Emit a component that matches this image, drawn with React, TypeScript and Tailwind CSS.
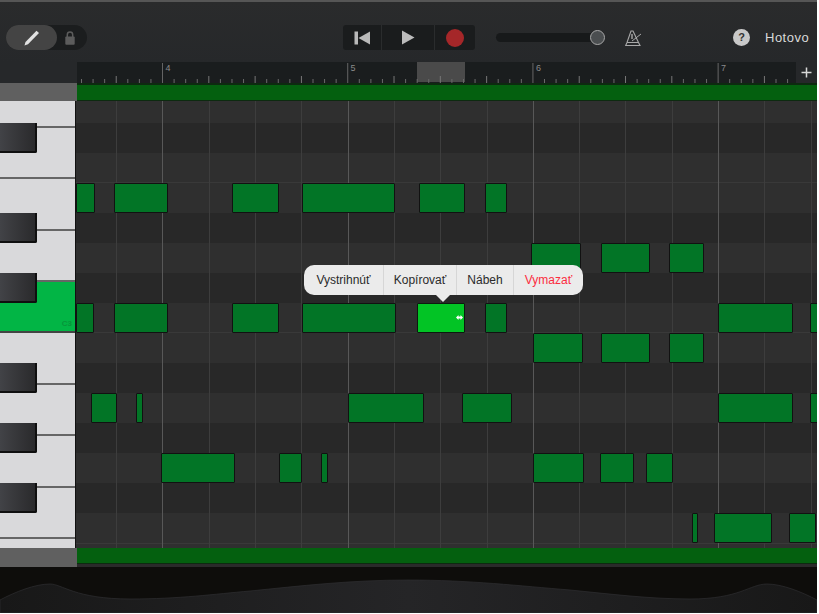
import React from "react";

const STEP = 46.3;
const LINES = Array.from({ length: 16 }, (_, i) => 116.1 + i * STEP);
const BAR_INDEX = new Set([1, 5, 9, 13]);

const ROWS: [number, boolean, boolean?][] = [
  [22, false], [30, true], [30, false, true], [30, false], [30, true], [30, false], [30, true], [30, false, true],
  [30, false], [30, true], [30, false], [30, true], [30, false], [30, true], [30, false],
];

const NOTES: [number, number, number, boolean?][] = [
  [183, 76, 95], [183, 114, 168], [183, 232, 279], [183, 302, 395], [183, 419, 465], [183, 485, 507],
  [243, 531, 581], [243, 601, 650], [243, 669, 704],
  [303, 76, 94], [303, 114, 168], [303, 232, 279], [303, 302, 396], [303, 417, 465, true], [303, 485, 507], [303, 718, 793], [303, 810, 820],
  [333, 533, 583], [333, 601, 650], [333, 669, 704],
  [393, 91, 117], [393, 136, 143], [393, 348, 424], [393, 462, 512], [393, 718, 793], [393, 810, 820],
  [453, 161, 235], [453, 279, 302], [453, 321, 328], [453, 533, 584], [453, 600, 634], [453, 646, 673],
  [513, 692, 698], [513, 714, 772], [513, 789, 816],
];

const WHITE_KEYS: [number, boolean][] = [
  [26.7, false], [51.4, false], [51.5, false], [51.4, false], [51.4, true], [51.5, false], [51.4, false], [51.4, false], [51.4, false], [9, false],
];
const BLACK_KEYS = [123, 213, 273, 363, 423, 483];
const MENU: [string, boolean][] = [["Vystrihnúť", false], ["Kopírovať", false], ["Nábeh", false], ["Vymazať", true]];

function Ruler() {
  const ticks = Array.from({ length: 64 }, (_, i) => 4.5 + i * (STEP / 4));
  return (
    <svg width="719" height="21" className="block">
      {ticks.map((x, i) => {
        const kind = i % 16 === 7 ? 2 : i % 4 === 3 ? 1 : 0;
        return x < 719 ? (
          <line key={i} x1={x} x2={x} y1={kind === 2 ? 1 : kind === 1 ? 14 : 17} y2="21" stroke={kind === 2 ? "#666" : kind === 1 ? "#777" : "#6a6a6a"} strokeWidth="1" />
        ) : null;
      })}
    </svg>
  );
}

export default function App() {
  return (
    <div className="w-[817px] h-[613px] flex flex-col overflow-hidden relative bg-[#26282a]" style={{ fontFamily: '"Liberation Sans", Arial, sans-serif' }}>
      {/* header */}
      <div className="h-[62px] shrink-0 border-t-2 border-[#565656] bg-gradient-to-b from-[#2a2b2c] to-[#26282a] flex items-center pt-[11px]">
        <div className="ml-[6px] w-[81px] h-[25px] rounded-full bg-[#1b1d1e] flex items-center">
          <div className="w-[51px] h-[25px] rounded-full bg-[#444] flex items-center justify-center">
            <svg width="16" height="16" viewBox="0 0 16 16">
              <path d="M0.5 15.5 L1.5 12 L12.5 0.8 L15 3 L4 14.3 Z" fill="#e2e2e2" />
            </svg>
          </div>
          <svg width="10" height="14" viewBox="0 0 10 14" className="ml-[8px]">
            <path d="M2.3 6V3.8a2.7 2.7 0 0 1 5.4 0V6" fill="none" stroke="#5c5c5c" strokeWidth="1.5" />
            <rect x="0.3" y="5.5" width="9.4" height="8.2" rx="1" fill="#5c5c5c" />
          </svg>
        </div>

        <div className="ml-[256px] w-[132px] h-[25px] rounded-[3px] bg-[#1a1c1d] flex">
          <div className="w-[39px] border-r border-[#2a2c2d] flex items-center justify-center">
            <svg width="17" height="14" viewBox="0 0 17 14">
              <rect x="0.5" y="0.5" width="3.5" height="13" fill="#b9b9b9" />
              <path d="M16 0.5V13.5L4.5 7Z" fill="#b9b9b9" />
            </svg>
          </div>
          <div className="w-[53px] border-r border-[#2a2c2d] flex items-center justify-center">
            <svg width="14" height="15" viewBox="0 0 14 15">
              <path d="M1 0.5V14.5L13.5 7.5Z" fill="#bcbcbc" />
            </svg>
          </div>
          <div className="flex-1 flex items-center justify-center">
            <div className="w-[18px] h-[18px] rounded-full bg-[#a52729]" />
          </div>
        </div>

        <div className="ml-[21px] w-[109px] h-[9px] rounded-full bg-[#17191a] flex items-center justify-end">
          <div className="w-[15px] h-[15px] rounded-full bg-[#4b4e50] border border-[#a8a8a8] shrink-0" />
        </div>

        <svg width="17" height="16" viewBox="0 0 17 16" className="ml-[20px]">
          <path d="M6 1H8L13.5 12.5 L15 15.5 H0.7 L2 12.5 Z M2 12.5H13.5" fill="none" stroke="#a8a8a8" strokeWidth="1.1" />
          <path d="M7 4V9" stroke="#a8a8a8" strokeWidth="1.4" />
          <path d="M7 11L16 4" stroke="#a8a8a8" strokeWidth="1" />
        </svg>

        <div className="ml-[91px] w-[17px] h-[17px] rounded-full bg-[#c9c9c9] flex items-center justify-center text-[11px] font-bold text-[#333]">?</div>
        <div className="ml-[15px] text-[13px] tracking-[0.5px] text-[#d9d9d9]">Hotovo</div>
      </div>

      {/* ruler */}
      <div className="h-[21px] shrink-0 flex">
        <div className="w-[77px] shrink-0" />
        <div className="w-[719px] h-[21px] bg-[#1a1d1e] relative">
          <div className="absolute left-[340px] top-0 w-[48px] h-[20px] bg-[#4a4a4a]" />
          <div className="absolute inset-0"><Ruler /></div>
          {[["4", 85.5], ["5", 270.5], ["6", 456], ["7", 641]].map(([t, x]) => (
            <span key={t as string} className="absolute top-[1px] text-[9px] leading-[11px] text-[#8a8a8a]" style={{ left: (x as number) + 3 }}>{t}</span>
          ))}
        </div>
        <div className="flex-1 flex items-center justify-center">
          <svg width="11" height="11" viewBox="0 0 11 11"><path d="M5.5 0.5V10.5M0.5 5.5H10.5" stroke="#d8d8d8" strokeWidth="1.5" /></svg>
        </div>
      </div>

      {/* top bar */}
      <div className="h-[18px] shrink-0 flex">
        <div className="w-[77px] bg-[#606060] shrink-0" />
        <div className="flex-1 bg-[#04600f] border-t-[2px] border-b border-[#0d2a10]" />
      </div>

      {/* roll */}
      <div className="h-[447px] shrink-0 flex relative">
        <div className="w-[75px] shrink-0 flex flex-col bg-[#d9d9db]">
          {WHITE_KEYS.map(([h, on], i) => (
            <div key={i} className={on ? "bg-[#02b545] border-b-2 border-[#444] relative shrink-0" : i === WHITE_KEYS.length - 1 ? "shrink-0" : "border-b-2 border-[#666] shrink-0"} style={{ height: h }}>
              {on && <span className="absolute right-[3px] bottom-[3px] text-[8px] leading-[8px] font-bold text-[#07963a]">C3</span>}
            </div>
          ))}
        </div>
        <div className="w-[1px] bg-[#111] shrink-0" />
        <div className="flex-1 flex flex-col">
          {ROWS.map(([h, dark, edge], i) => (
            <div key={i} className={(dark ? "bg-[#282828]" : "bg-[#2f2f2f]") + (edge ? " border-b border-[#393939]" : "") + " shrink-0"} style={{ height: h }} />
          ))}
          <div className="flex-1 bg-[#2f2f2f] border-t border-[#393939]" />
        </div>

        {BLACK_KEYS.map((y) => (
          <div key={y} className="absolute left-0 w-[37px] h-[30px] bg-gradient-to-r from-[#424347] to-[#2a2a2c] border-r-2 border-b-2 border-[#0f0f0f] rounded-br-[2px]" style={{ top: y - 101 }} />
        ))}
        {LINES.map((x, i) => (
          <div key={i} className={BAR_INDEX.has(i) ? "absolute top-0 bottom-0 w-[1px] bg-[#585858]" : "absolute top-0 bottom-0 w-[1px] bg-[#3d3d3d]"} style={{ left: x }} />
        ))}
        {NOTES.map(([y, a, b, on], i) => (
          <div key={i} className={on ? "absolute h-[30px] rounded-[1px] bg-[#02c425] border border-[#0c1a0e]" : "absolute h-[30px] rounded-[1px] bg-[#027526] border border-[#111]"} style={{ top: y - 101, left: a, width: b - a }} />
        ))}
        <svg width="7" height="5" viewBox="0 0 7 5" className="absolute left-[456px] top-[214px]">
          <path d="M0 2.5L2.5 0V1.5H4.5V0L7 2.5L4.5 5V3.5H2.5V5Z" fill="#fff" />
        </svg>
      </div>

      {/* bottom bar */}
      <div className="h-[19px] shrink-0 flex">
        <div className="w-[77px] bg-[#606060] shrink-0" />
        <div className="flex-1 flex flex-col bg-[#2a2a2a]">
          <div className="h-[16px] bg-[#04600f] border-b border-[#0d2a10]" />
        </div>
      </div>

      {/* bottom */}
      <div className="flex-1 bg-[#0e0d0b]">
        <svg width="817" height="46" viewBox="0 0 817 46" className="block">
          <defs>
            <linearGradient id="fillG" x1="0" x2="1" y1="0" y2="0">
              <stop offset="0" stopColor="#181818" />
              <stop offset="0.5" stopColor="#252527" />
              <stop offset="1" stopColor="#181818" />
            </linearGradient>
          </defs>
          <path d="M0 33 C15 25 35 17 50 17 C62 17 75 32 130 32 C180 32 215 27 250 24 C300 19 350 13 408 13 C470 13 520 19 570 23 C610 27 650 32 690 32 C740 32 750 17 767 17 C782 17 802 25 817 33 V46 H0 Z" fill="url(#fillG)" stroke="#2e2e30" strokeWidth="0.7" />
        </svg>
      </div>

      {/* popup */}
      <div className="absolute left-[304px] top-[265px] w-[279px] h-[30px] rounded-[10px] bg-[#ebebeb] flex text-[12px] text-[#2a2a2a]">
        {MENU.map(([t, red], i) => (
          <div key={t} className={(i === 0 ? "w-[80px]" : i === 1 ? "w-[73px]" : i === 2 ? "w-[57px]" : "flex-1") + (i < 3 ? " border-r border-[#d6d6d6]" : "") + (red ? " text-[#fb2d3f]" : "") + " flex items-center justify-center"}>{t}</div>
        ))}
      </div>
      <div className="absolute left-[436px] top-[295px] w-0 h-0 border-l-[7px] border-r-[7px] border-t-[7px] border-l-transparent border-r-transparent border-t-[#ebebeb]" />
    </div>
  );
}
